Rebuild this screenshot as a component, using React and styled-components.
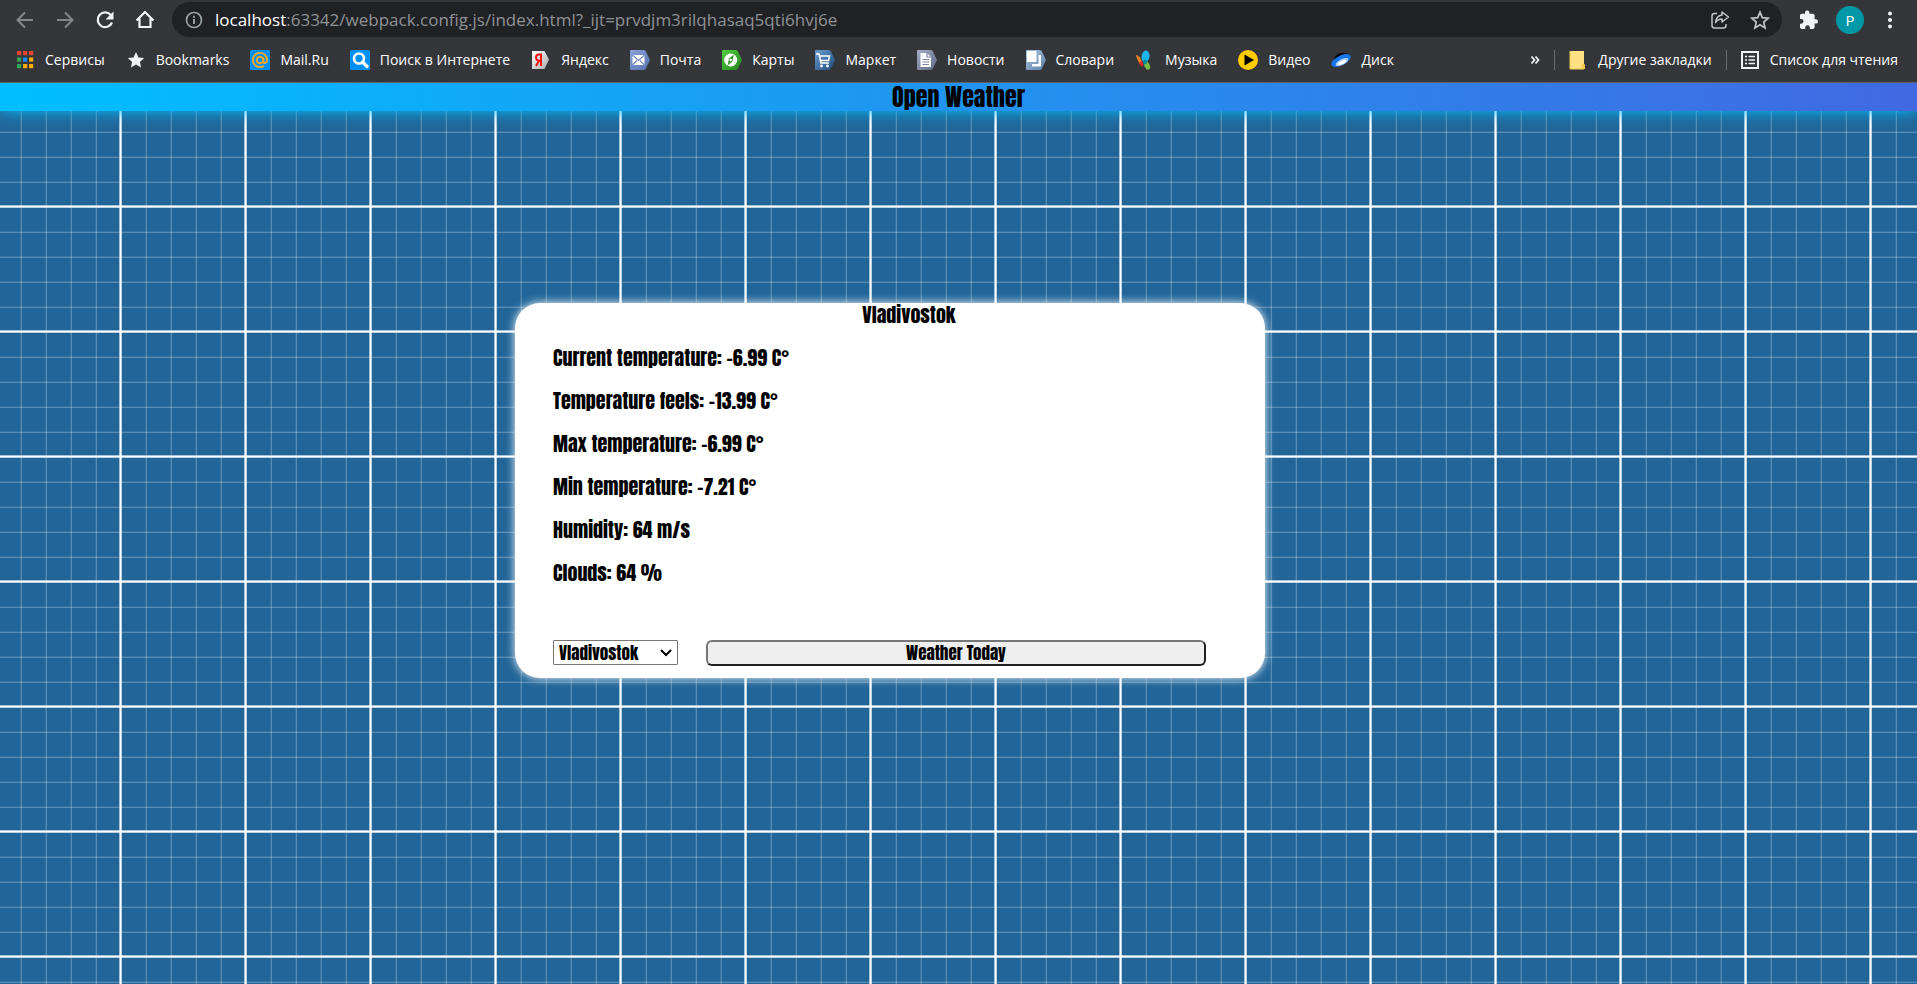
import React, { useState } from "react";
import styled, { createGlobalStyle } from "styled-components";

const GlobalStyle = createGlobalStyle`
  *, *::before, *::after { box-sizing: border-box; }
  html, body, #root { height: 100%; }
  body { margin: 0; background: #226699; }
`;

const uiFont = `"Segoe UI", "Open Sans", "Noto Sans", sans-serif`;
const displayFont = `Impact, Anton, "Roboto Condensed", sans-serif`;

const Window = styled.div`
  display: flex;
  flex-direction: column;
  min-height: 100%;
  font-family: ${uiFont};
`;

const Chrome = styled.header`
  position: relative;
  z-index: 1;
  background: #35363a;
  border-bottom: 1px solid #5f6164;
`;

const Toolbar = styled.div`
  display: flex;
  align-items: center;
  height: 39px;
  padding: 0 17px 0 5px;
`;

const IconButton = styled.button`
  display: grid;
  place-items: center;
  width: ${(p) => p.$width || 40}px;
  height: 32px;
  padding: 0;
  border: 0;
  background: none;
  color: ${(p) => (p.$dim ? "#85868a" : "#f1f3f4")};
  flex: none;
`;

const AddressBar = styled.div`
  display: flex;
  align-items: center;
  flex: 1;
  height: 35px;
  margin: 0 7px;
  padding: 0 2px 0 12px;
  border-radius: 18px;
  background: #202124;
  color: #9aa0a6;
`;

const Address = styled.a`
  flex: 1;
  margin-left: 11px;
  font-size: 17px;
  line-height: 24px;
  color: #8f9296;
  text-decoration: none;
  white-space: nowrap;
`;

const Host = styled.span`
  color: #fff;
`;

const Avatar = styled.button`
  width: 28px;
  height: 28px;
  margin: 0 16px 0 7px;
  padding: 0;
  border: 0;
  border-radius: 50%;
  background: #0097a7;
  color: #fff;
  font: 15px/28px ${uiFont};
`;

const Bookmarks = styled.nav`
  display: flex;
  align-items: center;
  height: 43px;
  padding: 0 19px 2px 15px;
`;

const BookmarkLink = styled.a`
  display: flex;
  align-items: center;
  gap: 10px;
  margin-right: ${(p) => p.$after ?? 21}px;
  color: #fff;
  font-size: 14px;
  line-height: 20px;
  text-decoration: none;
  white-space: nowrap;

  svg { flex: none; }
`;

const Spacer = styled.div`
  flex: 1;
`;

const Divider = styled.span`
  width: 1px;
  height: 20px;
  margin-right: 13px;
  background: #696a6d;
`;

const Page = styled.main`
  flex: 1;
  background-color: #226699;
  background-image:
    linear-gradient(rgba(255, 255, 255, .6) 1px, #fff 1px, #fff 2px, rgba(255, 255, 255, .6) 2px, rgba(255, 255, 255, .6) 3px, transparent 3px),
    linear-gradient(90deg, rgba(255, 255, 255, .6) 1px, #fff 1px, #fff 2px, rgba(255, 255, 255, .6) 2px, rgba(255, 255, 255, .6) 3px, transparent 3px),
    linear-gradient(rgba(255, 255, 255, .08) 1px, rgba(255, 255, 255, .25) 1px, rgba(255, 255, 255, .25) 2px, transparent 2px),
    linear-gradient(90deg, rgba(255, 255, 255, .08) 1px, rgba(255, 255, 255, .25) 1px, rgba(255, 255, 255, .25) 2px, transparent 2px);
  background-size: 125px 125px, 125px 125px, 25px 25px, 25px 25px;
  background-position: -3px -3px, -6px -3px, -5px -2px, -5px -2px;
  color: #000;
  font-family: ${displayFont};
`;

const Banner = styled.h1`
  margin: 0;
  height: 28px;
  background: linear-gradient(to right, deepskyblue, royalblue);
  box-shadow: 0 0 16px deepskyblue;
  font-size: 24px;
  font-weight: 400;
  line-height: 28px;
  text-align: center;
`;

const Stage = styled.div`
  display: flex;
  justify-content: center;
  padding: 192px 137px 40px 0;
`;

const Card = styled.section`
  width: 100%;
  max-width: 750px;
  padding: 0 0 12px 38px;
  border-radius: 25px;
  background: #fff;
  box-shadow: 0 0 10px #fff;
`;

const City = styled.h2`
  margin: 0;
  font-size: 20px;
  font-weight: 400;
  line-height: 24px;
  text-align: center;
`;

const Reading = styled.p`
  margin: 18px 0 0;
  font-size: 20px;
  line-height: 25px;
`;

const Controls = styled.form`
  display: flex;
  align-items: flex-start;
  gap: 28px;
  margin: 55px 59px 0 0;
`;

const SelectBox = styled.div`
  position: relative;
  flex: none;
  width: 125px;

  svg {
    position: absolute;
    right: 6px;
    top: 9px;
    pointer-events: none;
  }
`;

const CitySelect = styled.select`
  appearance: none;
  display: block;
  width: 100%;
  height: 25px;
  padding: 0 5px;
  border: 1px solid #767676;
  border-radius: 1px;
  background: #fff;
  color: #000;
  font: 400 17px/22px ${displayFont};
`;

const Submit = styled.button`
  flex: 1;
  height: 26px;
  padding: 0;
  border: 2px solid;
  border-color: #767676 #212121 #212121 #767676;
  border-radius: 6px;
  background: #efefef;
  color: #000;
  font: 400 17px/22px ${displayFont};
`;

const Svg = ({ size = 20, children, ...rest }) => (
  <svg width={size} height={size} viewBox="0 0 20 20" fill="none" aria-hidden="true" {...rest}>
    {children}
  </svg>
);

const BackIcon = () => (
  <Svg stroke="currentColor" strokeWidth="2"><path d="M18 10H3M10 2.500L2.500 10l7.500 7.500" /></Svg>
);
const ForwardIcon = () => (
  <Svg stroke="currentColor" strokeWidth="2"><path d="M2 10h15M10 2.500L17.500 10 10 17.500" /></Svg>
);
const ReloadIcon = () => (
  <Svg>
    <path d="M15.800 5A7.400 7.400 0 1 0 17 12.500" stroke="currentColor" strokeWidth="2.200" />
    <path d="M18.500 1.500v8h-8z" fill="currentColor" />
  </Svg>
);
const HomeIcon = () => (
  <Svg><path d="M1.500 10.500L10 2l8.500 8.500M4.500 8.500V17h11V8.500" stroke="currentColor" strokeWidth="2.200" /></Svg>
);
const InfoIcon = () => (
  <Svg>
    <circle cx="10" cy="10" r="7.500" stroke="currentColor" strokeWidth="1.700" />
    <path d="M10 9v5M10 5.800v1.900" stroke="currentColor" strokeWidth="1.900" />
  </Svg>
);
const ShareIcon = () => (
  <Svg stroke="#c4c5c7" strokeWidth="1.500" strokeLinejoin="round">
    <path d="M7 3.500H4.500a2.500 2.500 0 0 0-2.500 2.500v9.500a2.500 2.500 0 0 0 2.500 2.500h9a2.500 2.500 0 0 0 2.500-2.500V14" />
    <path d="M12 2l6.500 5-6.500 5V9c-3 0-5 1-6.500 3.500C6 8 8.500 5.500 12 5z" />
  </Svg>
);
const StarOutline = () => (
  <Svg stroke="#c4c5c7" strokeWidth="1.700">
    <path d="M10 2.200l2.300 5.500 5.900.5-4.500 3.900 1.400 5.800L10 14.800l-5.100 3.100 1.400-5.800-4.500-3.900 5.900-.5z" />
  </Svg>
);
const PuzzleIcon = () => (
  <Svg fill="currentColor">
    <path d="M16.800 9.200h-1.200V5.600c0-1-.8-1.800-1.800-1.800h-3.400V2.600a2.200 2.200 0 0 0-4.400 0v1.200H2.800C1.800 3.800 1 4.600 1 5.600V9h1.200a2.300 2.300 0 0 1 0 4.700H1v3.400c0 1 .8 1.800 1.800 1.800h3.400v-1.200a2.300 2.300 0 0 1 4.700 0v1.200h2.900c1 0 1.800-.8 1.800-1.800v-3.500h1.200a2.200 2.200 0 0 0 0-4.400z" />
  </Svg>
);
const MoreIcon = () => (
  <Svg fill="currentColor"><circle cx="10" cy="3.500" r="2" /><circle cx="10" cy="10" r="2" /><circle cx="10" cy="16.500" r="2" /></Svg>
);

const AppsIcon = () => (
  <Svg>
    {["#ea4335", "#ea4335", "#ea4335", "#34a853", "#1a8cff", "#fbab00", "#34a853", "#fbab00", "#fbab00"].map((c, i) => (
      <rect key={i} x={2 + (i % 3) * 6} y={1 + Math.floor(i / 3) * 6.500} width="4.200" height="4.200" fill={c} />
    ))}
  </Svg>
);
const StarIcon = () => (
  <Svg fill="#f1f3f4"><path d="M10 2l2.400 5.400 5.800.6-4.300 3.900 1.200 5.700-5.100-3-5.100 3 1.200-5.700L1.800 8l5.800-.6z" /></Svg>
);
const MailRuIcon = () => (
  <Svg>
    <rect width="20" height="20" rx="1.500" fill="#0091f2" />
    <circle cx="10" cy="10" r="3.300" stroke="#f7a823" strokeWidth="1.900" />
    <path d="M13.300 7v4.200c0 2.700 3.800 2.200 3.800-1.200a7.100 7.100 0 1 0-3 5.800" stroke="#f7a823" strokeWidth="1.900" />
  </Svg>
);
const SearchIcon = () => (
  <Svg>
    <rect width="20" height="20" rx="1.500" fill="#0091f2" />
    <circle cx="9" cy="8.500" r="5" stroke="#fff" strokeWidth="2.600" />
    <path d="M12.500 12l4.500 4.500" stroke="#fff" strokeWidth="3.200" strokeLinecap="round" />
  </Svg>
);

const Tag = ({ id, from, to, children }) => (
  <Svg>
    <defs>
      <linearGradient id={id} x1="0" y1="0" x2="1" y2="1">
        <stop offset="0" stopColor={from} />
        <stop offset="1" stopColor={to} />
      </linearGradient>
    </defs>
    <path d="M1 0h13l1.500.7L20 10l-4.500 9.300L14 20H1a1 1 0 0 1-1-1V1a1 1 0 0 1 1-1z" fill={`url(#${id})`} />
    {children}
  </Svg>
);
const YandexIcon = () => (
  <Svg>
    <defs>
      <linearGradient id="tag-yandex" x1="0" y1="0" x2="1" y2="1">
        <stop offset="0" stopColor="#fff" />
        <stop offset="1" stopColor="#a9a9a9" />
      </linearGradient>
    </defs>
    <path d="M1 1h12.500L18 9.500 13.500 19H1z" fill="url(#tag-yandex)" />
    <path d="M10 16V4.500H8c-2 0-3 1.300-3 3.100 0 2 1.100 3.100 3 3.100h2M8 10.700L5 16" stroke="#f5140c" strokeWidth="2" />
  </Svg>
);
const MailIcon = () => (
  <Tag id="tag-mail" from="#8ba3d9" to="#5470ad">
    <path d="M2.500 5h12v10h-12z" fill="#fff" />
    <path d="M2.500 5l6 5.500 6-5.500M2.500 15L7 10.500M14.500 15L10 10.500" stroke="#7389c0" strokeWidth="1.200" />
  </Tag>
);
const MapIcon = () => (
  <Tag id="tag-map" from="#4fd03f" to="#24821c">
    <circle cx="8.700" cy="10" r="6.500" fill="#fff" />
    <path d="M11.800 4.500L10.500 11.500 5.600 15.500l1.400-7z" fill="#329c29" />
    <circle cx="8.700" cy="10" r="1.300" fill="#fff" />
  </Tag>
);
const MarketIcon = () => (
  <Tag id="tag-market" from="#6c9cd0" to="#1f4a7c">
    <path d="M1 4h3l2 9h8M5 6h9.500l-1 4.500H6" stroke="#fff" strokeWidth="1.500" />
    <circle cx="6.500" cy="16" r="1.400" fill="#fff" /><circle cx="12.500" cy="16" r="1.400" fill="#fff" />
  </Tag>
);
const NewsIcon = () => (
  <Tag id="tag-news" from="#a7afc6" to="#5b6484">
    <path d="M3.500 3H10l4 4v10H3.500z" fill="#fff" />
    <path d="M10 3v4h4M5.500 9.500H12M5.500 12H12M5.500 14.500H12" stroke="#7d86a5" strokeWidth="1.200" />
  </Tag>
);
const DictIcon = () => (
  <Tag id="tag-dict" from="#a9c8e6" to="#5a7ea5">
    <path d="M1 1h9.500v11H1z" fill="#fff" />
    <path d="M12.500 5H15v11.500H6V14h6.500z" fill="#fff" />
  </Tag>
);
const MusicIcon = () => (
  <Svg>
    <ellipse cx="10.500" cy="6.500" rx="4" ry="6" transform="rotate(8 10.500 6.500)" fill="#1cb5ea" />
    <path d="M1 5c4 1 6 5 6.500 11C4 13 2 10 1 5z" fill="#f58220" />
    <path d="M3.500 13.500l3.500-3 1.500 4-1.500 2.500z" fill="#d9262c" />
    <ellipse cx="12" cy="15.500" rx="2.600" ry="4.300" transform="rotate(-25 12 15.500)" fill="#7ac143" />
    <ellipse cx="10" cy="12" rx="2" ry="2.600" fill="#008c95" />
  </Svg>
);
const VideoIcon = () => (
  <Svg><circle cx="10" cy="10" r="10" fill="#ffcc00" /><path d="M6.500 4.500L16 10l-9.500 5.500z" fill="#000" /></Svg>
);
const DiskIcon = () => (
  <Svg>
    <path d="M3 9C6 2 12 1 19 5l-3 4z" fill="#050505" />
    <ellipse cx="10" cy="10.500" rx="10.500" ry="4.800" transform="rotate(-27 10 10.500)" fill="#1876ee" />
    <ellipse cx="11" cy="12" rx="7" ry="2.800" transform="rotate(-27 11 12)" fill="#a9d0ff" />
    <ellipse cx="11" cy="12.500" rx="4.500" ry="1.800" transform="rotate(-27 11 12.500)" fill="#fff" />
  </Svg>
);
const FolderIcon = () => (
  <Svg>
    <path d="M2 1h14v13l1 1v4H2z" fill="#ffe082" />
    <path d="M13.500 19v-3.500l1.500-2 2 1.500v4z" fill="#f3cb45" />
    <path d="M2 1v18h14" stroke="#f1cc50" />
  </Svg>
);
const ReadingListIcon = () => (
  <Svg stroke="#f1f3f4">
    <rect x="2" y="2" width="16" height="16" strokeWidth="2" />
    <path d="M5 6.500h2M5 10h2M5 13.500h2M8.500 6.500H15M8.500 10H15M8.500 13.500H15" strokeWidth="1.600" />
  </Svg>
);
const OverflowIcon = () => (
  <Svg stroke="#f1f3f4" strokeWidth="1.800"><path d="M6.500 6.500L9.500 10l-3 3.500M10.500 6.500l3 3.500-3 3.500" /></Svg>
);

const BOOKMARKS = [
  ["Сервисы", AppsIcon],
  ["Bookmarks", StarIcon],
  ["Mail.Ru", MailRuIcon],
  ["Поиск в Интернете", SearchIcon],
  ["Яндекс", YandexIcon],
  ["Почта", MailIcon],
  ["Карты", MapIcon],
  ["Маркет", MarketIcon],
  ["Новости", NewsIcon],
  ["Словари", DictIcon],
  ["Музыка", MusicIcon],
  ["Видео", VideoIcon],
  ["Диск", DiskIcon],
];

const READINGS = [
  "Current temperature: -6.99 C°",
  "Temperature feels: -13.99 C°",
  "Max temperature: -6.99 C°",
  "Min temperature: -7.21 C°",
  "Humidity: 64 m/s",
  "Clouds: 64 %",
];

export default function App() {
  const [city, setCity] = useState("Vladivostok");
  return (
    <>
      <GlobalStyle />
      <Window>
        <Chrome>
          <Toolbar>
            <IconButton $dim aria-label="Back"><BackIcon /></IconButton>
            <IconButton $dim aria-label="Forward"><ForwardIcon /></IconButton>
            <IconButton aria-label="Reload"><ReloadIcon /></IconButton>
            <IconButton aria-label="Home"><HomeIcon /></IconButton>
            <AddressBar>
              <InfoIcon />
              <Address href="#">
                <Host>localhost</Host>:63342/webpack.config.js/index.html?_ijt=prvdjm3rilqhasaq5qti6hvj6e
              </Address>
              <IconButton aria-label="Share"><ShareIcon /></IconButton>
              <IconButton aria-label="Bookmark this page"><StarOutline /></IconButton>
            </AddressBar>
            <IconButton aria-label="Extensions"><PuzzleIcon /></IconButton>
            <Avatar aria-label="Profile">P</Avatar>
            <IconButton $width={20} aria-label="Menu"><MoreIcon /></IconButton>
          </Toolbar>
          <Bookmarks aria-label="Bookmarks">
            {BOOKMARKS.map(([label, Icon]) => (
              <BookmarkLink key={label} href="#"><Icon />{label}</BookmarkLink>
            ))}
            <Spacer />
            <IconButton $width={38} aria-label="More bookmarks"><OverflowIcon /></IconButton>
            <Divider />
            <BookmarkLink href="#" $after={14}><FolderIcon />Другие закладки</BookmarkLink>
            <Divider />
            <BookmarkLink href="#" $after={0}><ReadingListIcon />Список для чтения</BookmarkLink>
          </Bookmarks>
        </Chrome>
        <Page>
          <Banner>Open Weather</Banner>
          <Stage>
            <Card>
              <City>{city}</City>
              {READINGS.map((text) => <Reading key={text}>{text}</Reading>)}
              <Controls onSubmit={(e) => e.preventDefault()}>
                <SelectBox>
                  <CitySelect aria-label="City" value={city} onChange={(e) => setCity(e.target.value)}>
                    <option>Vladivostok</option>
                  </CitySelect>
                  <svg width="12" height="8" viewBox="0 0 12 8" fill="none" aria-hidden="true">
                    <path d="M1 1l5 5 5-5" stroke="#000" strokeWidth="2" />
                  </svg>
                </SelectBox>
                <Submit type="submit">Weather Today</Submit>
              </Controls>
            </Card>
          </Stage>
        </Page>
      </Window>
    </>
  );
}
